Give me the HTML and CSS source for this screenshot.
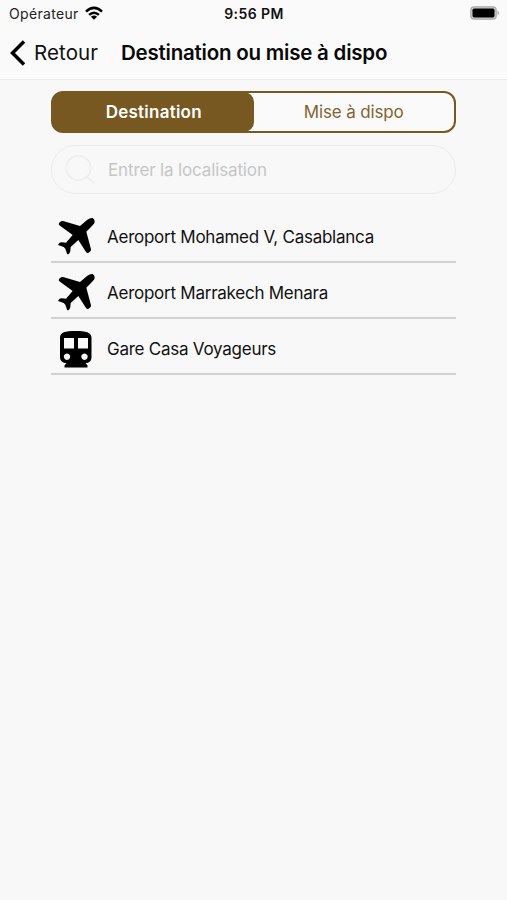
FILE: index.html
```html
<!DOCTYPE html>
<html lang="fr">
<head>
<meta charset="utf-8">
<title>Destination ou mise à dispo</title>
<link rel="stylesheet" href="styles.css">
</head>
<body>
<svg class="defs" aria-hidden="true">
  <symbol id="plane" viewBox="0 0 120 120">
    <path d="M91 8Q99 2 107 3Q114 7 113 15Q112 20 107 25L88 44L102 97Q103 100 100 103L95 107Q90 110 87 105L64 69L41 90L40 101Q40 104 38 107L36 110Q33 113 30 110L25 95L20 90L5 85Q2 83 5 80L8 77Q11 75 15 76L27 77L47 54L7 25Q4 22 6 18L10 14Q13 11 18 12L69 27Z"/>
  </symbol>
</svg>
<header>
  <div class="status">
    <div class="carrier"><span>Opérateur</span>
      <svg class="wifi" viewBox="0 0 20 15"><path d="M2 5.6Q10-1.8 18 5.6M5.1 8.9Q10 4.5 14.9 8.9"/><path class="fill" d="M6.9 10.7Q10 8.2 13.1 10.7L10 13.8Z"/></svg>
    </div>
    <time>9:56 PM</time>
    <svg class="battery" viewBox="0 0 30 14"><rect class="shell" x=".8" y=".8" width="25.4" height="12.4" rx="3.4"/><rect x="2.5" y="2.5" width="22" height="9" rx="1.7"/><path class="tip" d="M27.5 4.5Q30.5 7 27.5 9.5Z"/></svg>
  </div>
  <nav>
    <a class="back"><svg viewBox="0 0 16 26"><path d="M14 1.5L2.5 13L14 24.5"/></svg><span>Retour</span></a>
    <h1>Destination ou mise à dispo</h1>
  </nav>
</header>
<main>
  <div class="tabs"><button class="active">Destination</button><button>Mise à dispo</button></div>
  <div class="search">
    <svg viewBox="0 0 32 32"><circle cx="13.5" cy="14" r="12.2"/><path d="M22 23L30 30"/></svg>
    <span>Entrer la localisation</span>
  </div>
  <ul>
    <li><svg><use href="#plane"/></svg><span>Aeroport Mohamed V, Casablanca</span></li>
    <li><svg><use href="#plane"/></svg><span>Aeroport Marrakech Menara</span></li>
    <li><svg viewBox="0 0 40 40"><path fill-rule="evenodd" d="M3 9C3 3 8 2 18.500 2S34.500 3 34.500 9V28C34.500 32 32 34 28.500 34L30.500 36.500V38.500H7.500V36.500L9.500 34C6 34 3 32 3 28ZM7 9V19.500H17V9ZM21 9V19.500H31V9ZM10 24.500a3.200 3.200 0 1 0 .01 0ZM27.500 24.500a3.200 3.200 0 1 0 .01 0Z"/></svg><span>Gare Casa Voyageurs</span></li>
  </ul>
</main>
</body>
</html>
```

FILE: styles.css
```css
* { box-sizing: border-box; }
body { margin: 0; min-height: 900px; background: #f8f8f8; color: #111; font-family: Inter, "Liberation Sans", sans-serif; }
.defs { position: absolute; width: 0; height: 0; }
header { height: 80px; background: #fafafa; border-bottom: 1px solid #eee; }
.status { height: 27px; padding: 0 7px 0 9px; display: grid; grid-template-columns: 1fr auto 1fr; align-items: center; font-size: 14px; line-height: 27px; }
.carrier { display: flex; align-items: center; gap: 5px; color: #222; letter-spacing: .33px; }
.wifi { width: 20px; height: 15px; fill: none; stroke: #000; stroke-width: 2.5; margin-top: -1px; }
.wifi .fill { fill: #000; stroke: none; }
time { font-weight: 600; font-size: 14px; letter-spacing: .4px; margin-right: 1px; }
.battery { width: 30px; height: 14px; justify-self: end; margin-top: -1px; }
.shell { fill: #ccc; stroke: #aaa; stroke-width: 1.2; }
.tip { fill: #aaa; }
nav { height: 51px; display: flex; align-items: center; padding-left: 10px; }
.back { display: flex; align-items: center; width: 111px; gap: 8px; font-size: 20.5px; letter-spacing: .1px; }
.back svg { width: 16px; height: 26px; fill: none; stroke: #000; stroke-width: 3.5; }
h1 { margin: 0; font-size: 20.5px; font-weight: 600; letter-spacing: -.22px; white-space: nowrap; color: #080808; }
main { width: 405px; margin: 11px 0 0 51px; }
.tabs { display: grid; grid-template-columns: 1fr 1fr; height: 42px; border: 2.5px solid #775821; border-radius: 12px; background: #fafafa; }
.tabs button { border: 0; padding: 0; background: none; color: #82642f; font: 400 17px Inter, sans-serif; letter-spacing: -.15px; }
.tabs .active { margin: -1px 0 -1px -1px; padding-left: 2px; border-radius: 10px; background: #775821; color: #fff; font-weight: 600; letter-spacing: .25px; }
.search { height: 49px; margin-top: 12px; padding-left: 13px; border: 1px solid #ebebeb; border-radius: 25px; display: flex; align-items: center; gap: 11px; color: #c6c6c6; font-size: 17px; letter-spacing: -.14px; }
.search svg { width: 32px; height: 32px; fill: none; stroke: #ededed; stroke-width: 1.5; }
ul { list-style: none; margin: 13px 0 0; padding: 0; }
li { height: 56px; border-bottom: 2px solid #d2d2d2; padding: 6px 0 0 6px; display: flex; align-items: center; gap: 10px; font-size: 17px; letter-spacing: -.25px; }
li svg { width: 40px; height: 40px; flex: none; }
li span { white-space: nowrap; }
```
